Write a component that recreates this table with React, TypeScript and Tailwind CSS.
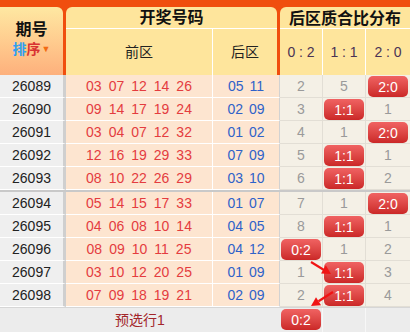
import React from "react";

type Cell = number | string;
const rows: { id: string; f: string[]; b: string[]; d: Cell[] }[] = [
  { id: "26089", f: ["03", "07", "12", "14", "26"], b: ["05", "11"], d: [2, 5, "2:0"] },
  { id: "26090", f: ["09", "14", "17", "19", "24"], b: ["02", "09"], d: [3, "1:1", 1] },
  { id: "26091", f: ["03", "04", "07", "12", "32"], b: ["01", "02"], d: [4, 1, "2:0"] },
  { id: "26092", f: ["12", "16", "19", "29", "33"], b: ["07", "09"], d: [5, "1:1", 1] },
  { id: "26093", f: ["08", "10", "22", "26", "29"], b: ["03", "10"], d: [6, "1:1", 2] },
  { id: "26094", f: ["05", "14", "15", "17", "33"], b: ["01", "07"], d: [7, 1, "2:0"] },
  { id: "26095", f: ["04", "06", "08", "10", "14"], b: ["04", "05"], d: [8, "1:1", 1] },
  { id: "26096", f: ["08", "09", "10", "11", "25"], b: ["04", "12"], d: ["0:2", 1, 2] },
  { id: "26097", f: ["03", "10", "12", "20", "25"], b: ["01", "09"], d: [1, "1:1", 3] },
  { id: "26098", f: ["07", "09", "18", "19", "21"], b: ["02", "09"], d: [2, "1:1", 4] },
];

function Badge({ t }: { t: string }) {
  return (
    <div className="mt-[1px] flex h-[21px] w-[40px] items-center justify-center rounded-[5px] bg-linear-to-b from-[#f06262] to-[#cb2727] text-[14px] leading-none text-white">
      {t}
    </div>
  );
}

function Row({ r }: { r: (typeof rows)[number] }) {
  const widths = ["w-[43px]", "w-[43px]", "w-[44px]"];
  return (
    <div className="flex h-[23px]">
      <div className="flex w-[66px] items-center justify-center border-b border-r-[3px] border-b-white border-r-[#cfcfcf] bg-[#efefef] text-[14px] text-[#222]">
        {r.id}
      </div>
      <div className="flex w-[147px] items-center justify-center gap-[7px] border-b border-r border-white bg-[#fde5d0] text-[14px] text-[#e43c3f]">
        {r.f.map((n, i) => (
          <span key={i}>{n}</span>
        ))}
      </div>
      <div className="flex w-[67px] items-center justify-center gap-[6px] border-b border-r border-b-white border-r-[#d2d2d2] bg-[#fde5d0] text-[14px] text-[#2f62c9]">
        {r.b.map((n, i) => (
          <span key={i}>{n}</span>
        ))}
      </div>
      {r.d.map((v, i) => (
        <div
          key={i}
          className={`${widths[i]} flex items-center justify-center border-b border-[#e2ded5] bg-[#f4f0e6] text-[14px] text-[#9a9a9a] ${i < 2 ? "border-r" : ""}`}
        >
          {typeof v === "string" ? <Badge t={v} /> : v}
        </div>
      ))}
    </div>
  );
}

export default function App() {
  return (
    <div className="relative h-[335px] w-[410px] overflow-hidden bg-white font-['Liberation_Sans','Noto_Sans_CJK_SC',sans-serif]">
      <div className="h-[7px] bg-[#f04e0e]" />
      {/* header */}
      <div className="flex h-[68px] bg-[#f04e0e]">
        <div className="flex w-[63px] flex-col items-center rounded-tr-[6px] bg-linear-to-b from-[#fee8a2] to-[#fdb07c] pt-[14px]">
          <div className="text-[16px] font-bold leading-[18px] text-[#111]">期号</div>
          <div className="mt-[2px] flex items-center text-[14px] font-bold leading-[16px]">
            <span className="text-[#2f9ff0]">排</span>
            <span className="text-[#d83232]">序</span>
            <span className="ml-[1px] text-[9px] text-[#f26a12]">▼</span>
          </div>
        </div>
        <div className="ml-[3px] flex w-[211px] flex-col rounded-t-[6px] bg-[#fee59c]">
          <div className="flex h-[22px] items-center justify-center border-b border-white text-[16px] font-bold text-[#111]">
            开奖号码
          </div>
          <div className="flex flex-1">
            <div className="flex w-[147px] items-center justify-center border-r border-white text-[14px] text-[#222]">
              前区
            </div>
            <div className="flex flex-1 items-center justify-center text-[14px] text-[#222]">后区</div>
          </div>
        </div>
        <div className="ml-[3px] flex w-[130px] flex-col rounded-tl-[6px] bg-[#fee59c]">
          <div className="flex h-[22px] items-center justify-center border-b border-white pt-[3px] text-[16px] font-bold text-[#111]">
            后区质合比分布
          </div>
          <div className="flex flex-1 text-[14px] text-[#4a3355]">
            <div className="flex w-[43px] items-center justify-center border-r border-white">0 : 2</div>
            <div className="flex w-[43px] items-center justify-center border-r border-white">1 : 1</div>
            <div className="flex w-[44px] items-center justify-center">2 : 0</div>
          </div>
        </div>
      </div>
      {/* body */}
      {rows.slice(0, 5).map((r) => (
        <Row key={r.id} r={r} />
      ))}
      <div className="h-[2px] bg-[#c9c9c9]" />
      {rows.slice(5).map((r) => (
        <Row key={r.id} r={r} />
      ))}
      {/* footer */}
      <div className="flex h-[25px] border-t border-[#d6d6d6] bg-[#ececec]">
        <div className="flex w-[280px] items-center justify-center text-[14px] text-[#a3262a]">预选行1</div>
        <div className="flex w-[43px] items-start justify-center border-r border-[#f7f7f7]">
          <Badge t="0:2" />
        </div>
        <div className="w-[43px] border-r border-[#f7f7f7]" />
        <div className="w-[44px]" />
      </div>
      {/* arrows */}
      <svg className="pointer-events-none absolute left-0 top-0" width="410" height="335">
        <line x1="311" y1="262" x2="324" y2="270" stroke="#f01414" strokeWidth="2.2" />
        <polygon points="331,274 321,273.5 325.8,265.3" fill="#f01414" />
        <line x1="333" y1="292" x2="318.5" y2="301.3" stroke="#f01414" strokeWidth="2.2" />
        <polygon points="311,306 321,305.3 316,297.2" fill="#f01414" />
      </svg>
    </div>
  );
}
